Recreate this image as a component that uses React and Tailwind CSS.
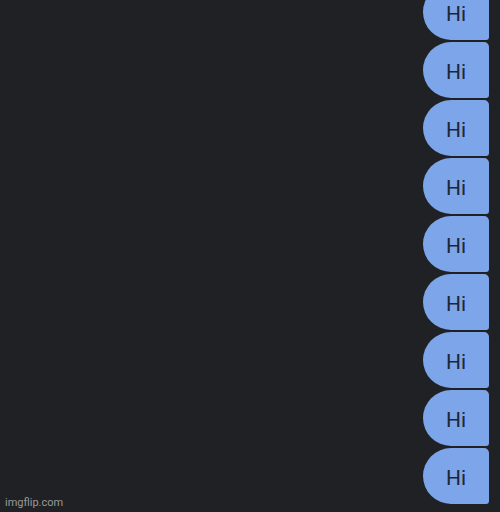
const bubbles = Array.from({ length: 9 });

export default function App() {
  return (
    <div
      className="relative w-[500px] h-[512px] overflow-hidden bg-[#202124]"
      style={{ fontFamily: '"Roboto", "Liberation Sans", sans-serif' }}
    >
      <div className="flex flex-col items-end gap-[2px] pr-[11px] -mt-[16px]">
        {bubbles.map((_, i) => (
          <div
            key={i}
            className="w-[66px] h-[56px] bg-[#7da5e9] rounded-l-[28px] rounded-tr-[5px] rounded-br-[3px] flex items-center justify-center pt-[4px]"
          >
            <span className="text-[21px] text-[#1c2636] leading-none">Hi</span>
          </div>
        ))}
      </div>
      <span className="absolute left-[5px] bottom-[1px] text-[11px] text-[#9a9a9c]">imgflip.com</span>
    </div>
  );
}
